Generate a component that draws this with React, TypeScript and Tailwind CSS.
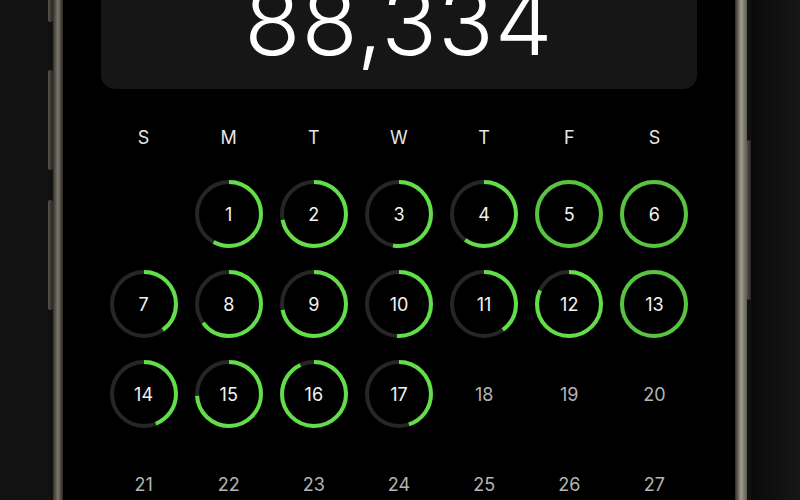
import React from "react"

const WEEK = ["S", "M", "T", "W", "T", "F", "S"]

// progress per day (0..1); null = no data yet
const PROGRESS: Record<number, number> = {
  1: 0.58, 2: 0.72, 3: 0.53, 4: 0.6, 5: 1, 6: 1,
  7: 0.4, 8: 0.65, 9: 0.72, 10: 0.51, 11: 0.4, 12: 0.82, 13: 1,
  14: 0.44, 15: 0.74, 16: 0.93, 17: 0.45,
}

function Ring({ value }: { value: number }) {
  const full = value >= 1
  return (
    <svg width="68" height="68" viewBox="0 0 68 68" className="absolute inset-0">
      <circle cx="34" cy="34" r="32" fill="none" stroke="#262626" strokeWidth="4" />
      <circle
        cx="34"
        cy="34"
        r="32"
        fill="none"
        stroke={full ? "#58c43f" : "#62de48"}
        strokeWidth="4"
        pathLength={100}
        strokeDasharray={`${value * 100} 100`}
        transform="rotate(-90 34 34)"
      />
    </svg>
  )
}

function DayCell({ day }: { day: number | null }) {
  if (day === null) return <div className="h-[90px]" />
  const p = PROGRESS[day]
  return (
    <div className="h-[90px] flex items-center justify-center">
      <div className="relative w-[68px] h-[68px] flex items-center justify-center">
        {p !== undefined && <Ring value={p} />}
        <span className={`relative text-[18px] ${p !== undefined ? "text-[#f2f2f2]" : "text-[#b4b4b4]"}`}>
          {day}
        </span>
      </div>
    </div>
  )
}

function SideButtons({ segments, className }: { segments: [number, number][]; className: string }) {
  return (
    <div className={`flex flex-col ${className}`}>
      {segments.map(([gapBefore, h], i) => (
        <div
          key={i}
          className="w-full rounded-[2px] bg-gradient-to-r from-[#5a564d] via-[#3d3a34] to-[#2a2824]"
          style={{ marginTop: gapBefore, height: h }}
        />
      ))}
    </div>
  )
}

export default function App() {
  const cells: (number | null)[] = [null, ...Array.from({ length: 27 }, (_, i) => i + 1)]

  return (
    <div
      className="w-[800px] h-[500px] overflow-hidden flex bg-[#111111]"
      style={{ fontFamily: "Inter, 'Noto Sans', sans-serif" }}
    >
      {/* left backdrop */}
      <div className="w-[48px] shrink-0 bg-[#121212]" />
      <SideButtons segments={[[-4, 26], [48, 100], [30, 110]]} className="w-[5px] shrink-0" />
      {/* left rail */}
      <div className="w-[10px] shrink-0 bg-gradient-to-r from-[#34322d] via-[#7e786c] to-[#2a2825]" />

      {/* screen */}
      <div className="w-[672px] shrink-0 bg-black px-[38px] text-white">
        <div className="h-[89px] rounded-b-[14px] bg-[#161616] flex items-end justify-center pb-[21px]">
          <span className="text-[92px] leading-none font-light tracking-[1px] text-white">88,334</span>
        </div>

        <div className="grid grid-cols-7 mt-[33px] h-[30px] items-center text-center text-[18px] text-[#e6e6e6]">
          {WEEK.map((d, i) => (
            <span key={i}>{d}</span>
          ))}
        </div>

        <div className="grid grid-cols-7 mt-[17px]">
          {cells.map((d, i) => (
            <DayCell key={i} day={d} />
          ))}
        </div>
      </div>

      {/* right rail */}
      <div className="w-[12px] shrink-0 bg-gradient-to-r from-[#2e2c28] via-[#a39d8f] to-[#5f5b52]" />
      <SideButtons segments={[[140, 160]]} className="w-[4px] shrink-0" />
      {/* right backdrop */}
      <div className="flex-1 bg-gradient-to-r from-[#0a0a0a] to-[#171717]" />
    </div>
  )
}
